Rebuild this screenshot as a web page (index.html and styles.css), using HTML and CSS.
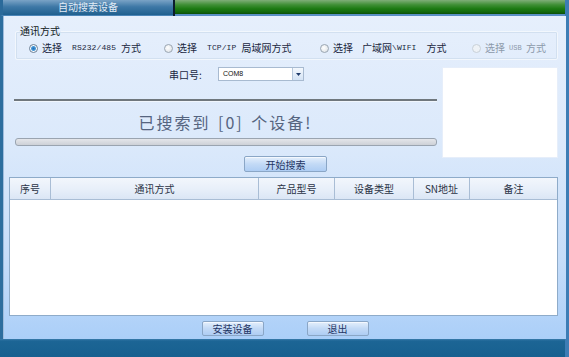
FILE: index.html
```html
<!DOCTYPE html>
<html>
<head>
<meta charset="utf-8">
<link rel="stylesheet" href="styles.css">
</head>
<body>
<div class="window">
  <div class="titlebar">
    <div class="tab">自动搜索设备</div>
    <div class="tab-sep"></div>
    <div class="green"></div>
  </div>
  <div class="main">
    <div class="content">
      <fieldset class="group">
        <legend>通讯方式</legend>
        <div class="radios">
          <div class="opt w1"><span class="radio on"></span><span class="cn">选择</span><span class="lat">RS232/485</span><span class="cn">方式</span></div>
          <div class="opt w2"><span class="radio"></span><span class="cn">选择</span><span class="lat">TCP/IP</span><span class="cn">局域网方式</span></div>
          <div class="opt w3"><span class="radio"></span><span class="cn">选择</span><span class="cn tight">广域网</span><span class="lat nogap">\WIFI</span><span class="cn">方式</span></div>
          <div class="opt dis"><span class="radio dim"></span><span class="cn">选择</span><span class="lat small">USB</span><span class="cn">方式</span></div>
        </div>
      </fieldset>
      <div class="mid">
        <div class="left">
          <div class="portrow">
            <span class="plabel">串口号:</span>
            <div class="combo"><span class="ctext">COM8</span><span class="cbtn"><svg width="5" height="3" viewBox="0 0 5 3"><path d="M0 0H5L2.5 3Z" fill="#1f3a6a"/></svg></span></div>
          </div>
          <div class="rule"></div>
          <div class="found">已搜索到 [0] 个设备!</div>
          <div class="progress"></div>
          <div class="btn search">开始搜索</div>
        </div>
        <div class="panel"></div>
      </div>
      <div class="table">
        <div class="thead">
          <div class="th c1">序号</div>
          <div class="th c2">通讯方式</div>
          <div class="th c3">产品型号</div>
          <div class="th c4">设备类型</div>
          <div class="th c5">SN地址</div>
          <div class="th c6">备注</div>
        </div>
        <div class="tbody"></div>
      </div>
      <div class="actions">
        <div class="btn act">安装设备</div>
        <div class="btn act">退出</div>
      </div>
    </div>
    <div class="redge"></div>
  </div>
  <div class="bottombar"><div class="redge2"></div></div>
</div>
</body>
</html>
```
FILE: styles.css
```css
* { box-sizing: border-box; }
html, body { margin: 0; padding: 0; }
body {
  width: 569px;
  height: 357px;
  overflow: hidden;
  font-family: "Noto Sans CJK SC", "DejaVu Sans", sans-serif;
  font-size: 10px;
  color: #1a2740;
  background: #2d6e9e;
}
.window { display: flex; flex-direction: column; width: 569px; height: 357px; }

.titlebar { display: flex; height: 16px; background: #3d7db5; }
.tab {
  width: 173px;
  height: 16px;
  border-left: 3px solid #2b6a9a;
  background: linear-gradient(#7aa3c6, #3e78a6 45%, #20608f 100%);
  color: #e2ecf6;
  font-size: 10px;
  line-height: 14px;
  text-align: center;
  border-bottom: 1px solid #4c86b8;
}
.tab-sep { width: 2px; height: 16px; background: #0c1c2c; }
.green {
  flex: 1;
  height: 16px;
  margin-right: 4px;
  background: linear-gradient(#7fae78 0%, #3f8f35 30%, #1c7a12 55%, #13680c 75%, #0b4d08 88%, #5a8fc4 89%, #5a8fc4 100%);
}

.main { display: flex; height: 323px; }
.content {
  flex: 1;
  margin-left: 3px;
  display: flex;
  flex-direction: column;
  padding: 9px 8px 0 5px;
  background: linear-gradient(#e6effc 0%, #dbe9fb 40%, #c6ddf9 75%, #abcff8 100%);
  border-left: 1px solid #9fbcdc;
}
.redge { width: 4px; background: #3d7db5; }

.group {
  margin: 0 0 0 6px;
  padding: 5px 0 4px 13px;
  border: 1px solid #f2f7fd;
  border-radius: 2px;
  box-shadow: inset 0 0 0 1px #d2e0f0;
  height: 35px;
}
.group legend {
  padding: 0 1px;
  margin-left: -10px;
  font-size: 10px;
  line-height: 12px;
  color: #101820;
}
.radios { display: flex; align-items: center; height: 12px; }
.opt { display: flex; align-items: center; height: 12px; white-space: nowrap; }
.w1 { width: 135px; }
.w2 { width: 156px; }
.w3 { width: 152px; }
.radio {
  width: 9px; height: 9px; border-radius: 50%;
  border: 1px solid #9aa6b2;
  background: radial-gradient(circle at 40% 40%, #ffffff, #d8dde2);
  margin-right: 4px;
  flex: none;
}
.radio.on {
  border-color: #6d8196;
  background: radial-gradient(circle, #1f6fb8 0, #4a9ad8 2px, #ffffff 3px, #e6ebf0 100%);
}
.radio.dim { border-color: #c8d0d8; background: #eef2f6; }
.cn { font-size: 10px; line-height: 12px; }
.lat {
  font-family: "Liberation Mono", "DejaVu Sans Mono", monospace;
  font-size: 8px;
  line-height: 12px;
  margin: 0 5px 0 10px;
  letter-spacing: 0.1px;
}
.lat.nogap { margin-left: 0; margin-right: 10px; }
.cn.tight { margin-left: 9px; }
.lat.small { font-size: 7px; margin: 0 4px 0 4px; }
.dis { color: #8c99aa; }

.mid { display: flex; margin-top: 7px; padding-left: 5px; }
.left { width: 423px; display: flex; flex-direction: column; }
.portrow { display: flex; align-items: center; height: 14px; padding-left: 155px; }
.plabel { width: 49px; font-size: 10px; color: #1a2740; }
.combo {
  width: 86px; height: 14px;
  display: flex; align-items: stretch;
  background: #fff;
  border: 1px solid #a8bad0;
}
.ctext {
  flex: 1;
  font-family: "Liberation Sans", "DejaVu Sans", sans-serif;
  font-size: 7px; line-height: 12px; padding-left: 4px; color: #111;
}
.cbtn {
  width: 11px;
  display: flex; align-items: center; justify-content: center;
  background: linear-gradient(#f4f8fd, #d4e3f5);
  border-left: 1px solid #b7c8dc;
}
.rule {
  margin-top: 18px;
  height: 3px;
  border-top: 2px solid #6f777d;
  border-bottom: 1px solid #f0f6fd;
}
.found {
  margin-top: 9px;
  height: 22px;
  text-align: center;
  font-size: 16px;
  line-height: 22px;
  color: #55647f;
  letter-spacing: 2px;
  word-spacing: 2px;
}
.progress {
  margin-top: 5px;
  margin-left: 1px;
  height: 8px;
  border: 1px solid #9aa4b0;
  border-radius: 3px;
  background: linear-gradient(#e4e6ea, #cdd1d7);
}
.btn {
  display: flex; align-items: center; justify-content: center;
  height: 16px;
  border: 1px solid #8aa6c6;
  border-radius: 2px;
  background: linear-gradient(#e4effc, #c3daf6 50%, #aecdf3 100%);
  box-shadow: inset 0 1px 0 #f4f8fe;
  color: #1f3563;
  font-size: 10px;
}
.search { width: 83px; margin-top: 10px; margin-left: 230px; }
.panel {
  width: 116px; height: 91px;
  margin-left: 5px;
  background: #fff;
  border: 1px solid #e6eefa;
}

.table {
  margin-top: 5px;
  height: 139px;
  display: flex; flex-direction: column;
  border: 1px solid #8eabc9;
  background: #fff;
}
.thead {
  display: flex; height: 22px;
  background: linear-gradient(#f2f6fc, #e6eef9 60%, #dbe6f5);
  border-bottom: 1px solid #a9bdd5;
}
.th {
  display: flex; align-items: center; justify-content: center;
  font-size: 10px; color: #2a3346;
  border-right: 1px solid #a9bdd5;
}
.c1 { width: 41px; }
.c2 { width: 208px; }
.c3 { width: 76px; }
.c4 { width: 79px; }
.c5 { width: 56px; }
.c6 { flex: 1; border-right: none; }
.tbody { flex: 1; background: #fff; }

.actions {
  display: flex; justify-content: center; gap: 43px;
  margin-top: 5px;
  padding-left: 3px;
}
.act { width: 62px; height: 15px; }

.bottombar {
  height: 18px;
  display: flex; justify-content: flex-end;
  background: linear-gradient(#3a7cac 0, #1c6595 2px, #17608f 100%);
}
.redge2 { width: 4px; background: #3d7db5; }
```
